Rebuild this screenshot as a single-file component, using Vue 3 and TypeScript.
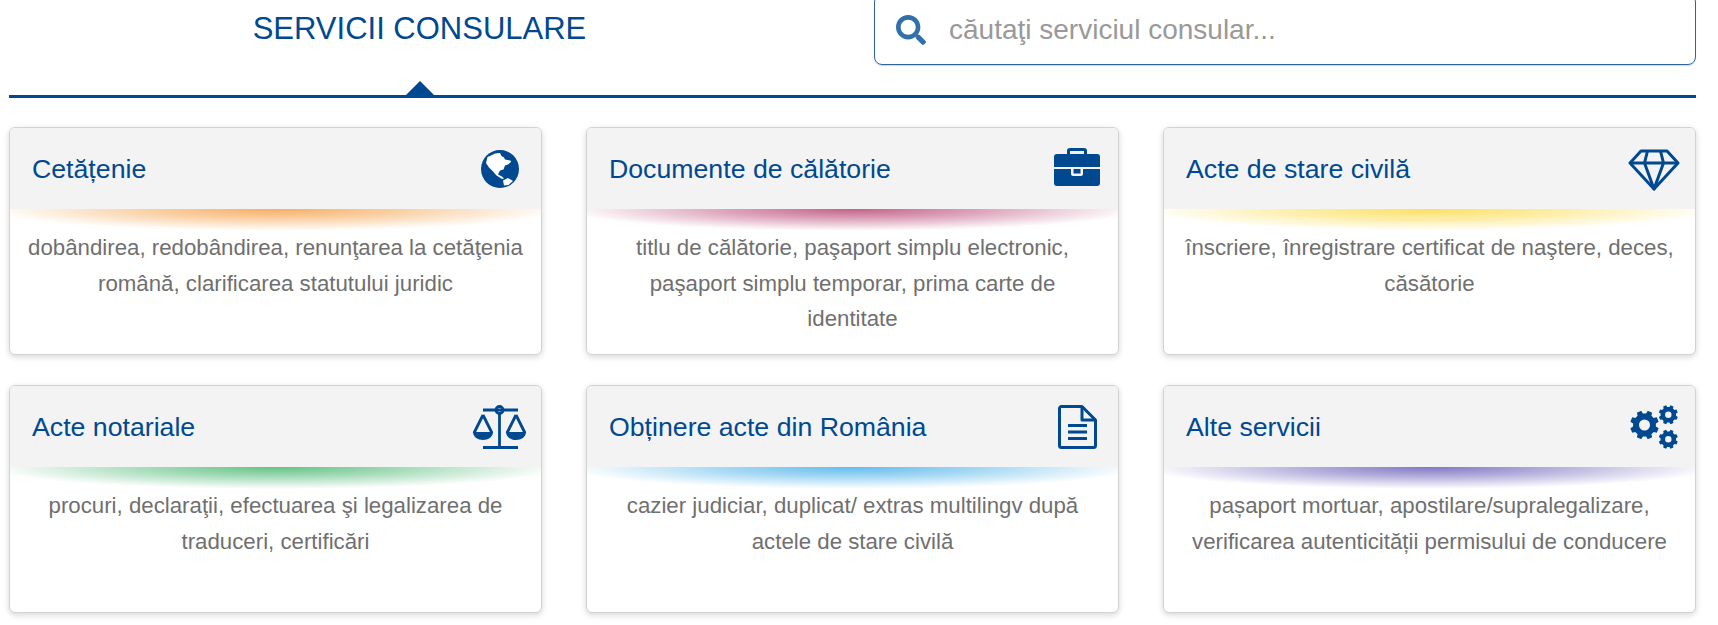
<script setup lang="ts">
interface Service {
  title: string
  text: string
  icon: string
  glow: string
}

const services: Service[] = [
  { title: 'Cetățenie', text: 'dobândirea, redobândirea, renunţarea la cetăţenia română, clarificarea statutului juridic', icon: 'globe', glow: '#f6a552' },
  { title: 'Documente de călătorie', text: 'titlu de călătorie, paşaport simplu electronic, paşaport simplu temporar, prima carte de identitate', icon: 'case', glow: '#bd4f7c' },
  { title: 'Acte de stare civilă', text: 'înscriere, înregistrare certificat de naştere, deces, căsătorie', icon: 'gem', glow: '#fddc50' },
  { title: 'Acte notariale', text: 'procuri, declaraţii, efectuarea şi legalizarea de traduceri, certificări', icon: 'scale', glow: '#52bb78' },
  { title: 'Obținere acte din România', text: 'cazier judiciar, duplicat/ extras multilingv după actele de stare civilă', icon: 'doc', glow: '#52b4ea' },
  { title: 'Alte servicii', text: 'pașaport mortuar, apostilare/supralegalizare, verificarea autenticității permisului de conducere', icon: 'cogs', glow: '#7269bd' }
]

function gear(cx: number, cy: number, outer: number, inner: number, hole: number, teeth = 8): string {
  const step = (Math.PI * 2) / teeth
  const at = (r: number, a: number) => `${(cx + r * Math.cos(a)).toFixed(2)} ${(cy + r * Math.sin(a)).toFixed(2)}`
  const pts: string[] = []
  for (let i = 0; i < teeth; i++) {
    const a = i * step + step / 2
    pts.push(at(inner, a - step * 0.32), at(outer, a - step * 0.21), at(outer, a + step * 0.21), at(inner, a + step * 0.32))
  }
  return `M${pts.join('L')}Z M${cx - hole} ${cy}a${hole} ${hole} 0 1 0 ${hole * 2} 0a${hole} ${hole} 0 1 0 ${-hole * 2} 0Z`
}

const cogs = [gear(14.5, 20, 14.5, 11.5, 5.5), gear(38.3, 9.7, 9.7, 7.8, 3.2), gear(38.3, 34.3, 9.7, 7.8, 3.2)].join(' ')
</script>

<template>
  <div class="page">
    <header class="top">
      <div class="heading">
        <h1>SERVICII CONSULARE</h1>
      </div>
      <label class="search">
        <svg class="search-icon" viewBox="0 0 512 512" aria-hidden="true">
          <path d="M505 442.7L405.3 343c-4.5-4.5-10.6-7-17-7H372c27.6-35.3 44-79.7 44-128C416 93.1 322.9 0 208 0S0 93.1 0 208s93.1 208 208 208c48.3 0 92.7-16.4 128-44v16.3c0 6.4 2.5 12.5 7 17l99.7 99.7c9.4 9.4 24.6 9.4 33.9 0l28.3-28.3c9.4-9.4 9.4-24.6.1-34zM208 336c-70.7 0-128-57.2-128-128 0-70.7 57.2-128 128-128 70.7 0 128 57.2 128 128 0 70.7-57.2 128-128 128z" />
        </svg>
        <input type="text" placeholder="căutaţi serviciul consular..." />
      </label>
    </header>

    <main class="grid">
      <article v-for="s in services" :key="s.title" class="card">
        <div class="card-head">
          <h2>{{ s.title }}</h2>
          <span class="icon-box">
            <svg v-if="s.icon === 'globe'" width="38" height="38" viewBox="0 0 38 38">
              <circle cx="19" cy="19" r="19" class="fill" />
              <path fill="#fff" d="M6.500 7 11 5 14 3.500 19 3 20.500 6 23 7.500 24 9.500 29.500 10.500 30 12 27 14.500 24 15.500 22.500 19.500 19 20.500 17 24.500 21 26.500 23 28.500 21 29 15.500 25.500 12 21.500 8 17.500 5 13Z" />
              <path fill="#fff" d="M22 30.500 27 28 32 31 27.500 35 23 35.500Z" />
            </svg>
            <svg v-else-if="s.icon === 'case'" class="up" width="46" height="38" viewBox="0 0 46 38">
              <path class="fill" d="M13 6V3a3 3 0 0 1 3-3h14a3 3 0 0 1 3 3v3h-3V3H16v3Z" />
              <path class="fill" d="M3 6h40a3 3 0 0 1 3 3v10H0V9a3 3 0 0 1 3-3Z" />
              <path class="fill" d="M0 21h17v5a2 2 0 0 0 2 2h8a2 2 0 0 0 2-2v-5h17v14a3 3 0 0 1-3 3H3a3 3 0 0 1-3-3Z" />
              <rect class="fill" x="19.500" y="21" width="7" height="4.500" />
            </svg>
            <svg v-else-if="s.icon === 'gem'" class="down" width="52" height="42" viewBox="0 0 52 42">
              <g class="line" stroke-width="3" stroke-linejoin="round">
                <path d="M13 2H39L50 14 26 40 2 14Z" />
                <path d="M2 14H50M19.500 2 16.500 14 26 40 35.500 14 32.500 2" />
              </g>
            </svg>
            <svg v-else-if="s.icon === 'scale'" class="left" width="55" height="44" viewBox="0 0 55 44">
              <g class="line" stroke-width="2.800">
                <path d="M11 5H46M27.500 9V42M11 42.500H46" />
                <circle cx="27.500" cy="5" r="3.500" />
                <path d="M11 10 2 28M11 10 20 28M44 10 35 28M44 10 53 28" />
              </g>
              <path class="fill" d="M1 27H21C21 32 16 35 11 35S1 32 1 27Z" />
              <path class="fill" d="M34 27H54C54 32 49 35 44 35S34 32 34 27Z" />
            </svg>
            <svg v-else-if="s.icon === 'doc'" width="39" height="44" viewBox="0 0 39 44">
              <g class="line" stroke-width="3" stroke-linejoin="round">
                <path d="M3.500 1.500H24L37.500 15V40.500a2 2 0 0 1-2 2H3.500a2 2 0 0 1-2-2V3.500a2 2 0 0 1 2-2Z" />
                <path d="M24 1.500V15H37.500" />
                <path d="M10 20.500H29M10 27H29M10 33.500H29" />
              </g>
            </svg>
            <svg v-else width="48" height="44" viewBox="0 0 48 44">
              <path class="fill" fill-rule="evenodd" :d="cogs" />
            </svg>
          </span>
        </div>
        <div class="card-body" :style="{ '--glow': s.glow }">
          <p>{{ s.text }}</p>
        </div>
      </article>
    </main>
  </div>
</template>

<style>
html, body { margin: 0; background: #fff; overflow: hidden; }
</style>

<style scoped>
.page {
  width: 1718px;
  height: 625px;
  overflow: hidden;
  box-sizing: border-box;
  padding: 0 22px 0 9px;
  font-family: "Liberation Sans", Arial, sans-serif;
}
.top {
  position: relative;
  display: flex;
  align-items: flex-start;
  height: 98px;
  box-sizing: border-box;
  border-bottom: 3px solid #004990;
  margin-bottom: 29px;
}
.top::after {
  content: "";
  position: absolute;
  left: 396px;
  bottom: -1px;
  width: 0;
  height: 0;
  border-left: 15px solid transparent;
  border-right: 15px solid transparent;
  border-bottom: 15px solid #004990;
}
.heading {
  width: 821px;
  text-align: center;
  flex: none;
}
h1 {
  margin: 0;
  padding-top: 12px;
  font-size: 31px;
  line-height: 34px;
  font-weight: 400;
  color: #004990;
}
.search {
  margin-left: 44px;
  margin-top: -6px;
  flex: 1;
  height: 71px;
  box-sizing: border-box;
  display: flex;
  align-items: center;
  border: 1px solid #2f659c;
  border-radius: 8px;
  padding-left: 21px;
  gap: 23px;
  box-shadow: 0 1px 1px rgba(47, 101, 156, .25);
}
.search-icon {
  width: 30px;
  height: 30px;
  fill: #336fa8;
  flex: none;
}
.search input {
  flex: 1;
  border: 0;
  outline: 0;
  padding: 0;
  background: transparent;
  font: 400 28px "Liberation Sans", Arial, sans-serif;
  color: #555;
}
.search input::placeholder {
  color: #999;
  opacity: 1;
}
.grid {
  display: grid;
  grid-template-columns: repeat(3, 533px);
  justify-content: space-between;
  row-gap: 30px;
}
.card {
  height: 228px;
  box-sizing: border-box;
  background: #fff;
  border: 1px solid #d2d2d2;
  border-radius: 6px;
  box-shadow: 0 2px 6px rgba(0, 0, 0, .16);
  overflow: hidden;
}
.card-head {
  height: 81px;
  box-sizing: border-box;
  background: #f3f3f3;
  display: flex;
  align-items: center;
  justify-content: space-between;
  padding: 0 15px 0 22px;
}
h2 {
  margin: 0;
  padding-top: 2px;
  font-size: 26.7px;
  font-weight: 400;
  color: #004990;
}
.icon-box {
  width: 52px;
  flex: none;
  display: flex;
  justify-content: center;
}
.icon-box svg { display: block; flex: none; }
.icon-box .up { margin-top: -3px; }
.icon-box .down { margin-top: 2px; }
.icon-box .left { margin-right: 2px; }
.fill { fill: #004990; }
.line { fill: none; stroke: #004990; }
.card-body {
  position: relative;
  padding: 21px 17px 0;
}
.card-body::before {
  content: "";
  position: absolute;
  left: 0;
  right: 0;
  top: 0;
  height: 22px;
  background: radial-gradient(ellipse 54% 100% at 50% 0, color-mix(in srgb, var(--glow) 90%, transparent) 0%, color-mix(in srgb, var(--glow) 52%, transparent) 45%, transparent 100%);
}
p {
  position: relative;
  margin: 0;
  font-size: 22.25px;
  line-height: 35.5px;
  text-align: center;
  color: #6f6f6f;
}
</style>
